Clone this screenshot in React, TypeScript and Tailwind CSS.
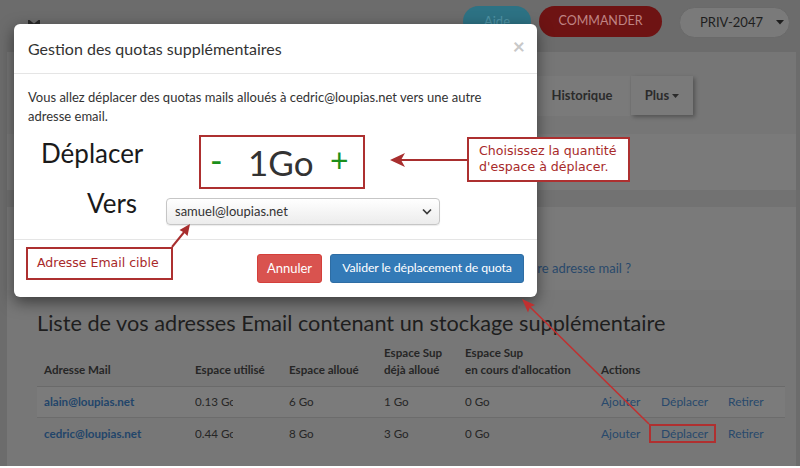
import React from "react";

const lato = "font-['Lato',sans-serif]";
const dv = "font-['DejaVu_Sans',sans-serif]";

function Modal() {
  return (
    <div className={`absolute left-[14px] top-[24px] w-[523px] h-[273px] bg-white rounded-[6px] shadow-[0_5px_15px_rgba(0,0,0,0.5)] flex flex-col ${lato} text-[#333]`}>
      <div className="h-[49px] border-b border-[#e5e5e5] flex items-center pl-[14px] pr-[14px] box-content">
        <div className="text-[16px] leading-[20px] mt-[1px]">Gestion des quotas supplémentaires</div>
        <div className="ml-auto text-[21px] font-bold leading-none text-[#c8c8c8] -mt-[6px] mr-[-2px]">×</div>
      </div>
      <div className="h-[165px] px-[14px] pt-[14px] flex flex-col">
        <p className="text-[13px] leading-[19px] h-[38px]">
          Vous allez déplacer des quotas mails alloués à cedric@loupias.net vers une autre adresse email.
        </p>
        <div className="flex items-start mt-[9px] h-[54px]">
          <div className="w-[171px] pl-[13px] text-[26px] leading-[26px] mt-[5px] text-[#1a1a1a]">Déplacer</div>
          <div className="w-[166px] h-[54px] border-2 border-[#ad3030] flex items-center">
            <span className="w-[48px] pl-[9px] text-[34px] leading-none text-[#1b8f1b] -mt-[4px]">-</span>
            <span className="w-[82px] text-[35px] leading-none text-[#333] -ml-[1px]">1Go</span>
            <span className="text-[32px] leading-none text-[#1b8f1b] -mt-[4px]">+</span>
          </div>
        </div>
        <div className="flex items-start mt-[9px] h-[27px]">
          <div className="w-[138px] pl-[59px] text-[26px] leading-[26px] -mt-[8px] text-[#1a1a1a]">Vers</div>
          <div className="w-[274px] h-[27px] rounded-[4px] border border-[#c6c6c6] bg-[linear-gradient(#ffffff,#ececec)] shadow-[0_1px_1px_rgba(0,0,0,0.08)] flex items-center pl-[8px] pr-[7px]">
            <span className="text-[13px] text-[#333]">samuel@loupias.net</span>
            <svg className="ml-auto" width="10" height="7" viewBox="0 0 10 7">
              <path d="M1 1.5l4 4 4-4" stroke="#3a3a3a" strokeWidth="1.7" fill="none" />
            </svg>
          </div>
        </div>
      </div>
      <div className="border-t border-[#e5e5e5] flex-1 flex items-center justify-end gap-[8px] pr-[13px]">
        <div className="h-[29px] w-[65px] rounded-[3px] bg-[#d9534f] border border-[#d43f3a] text-white text-[13px] flex items-center justify-center">Annuler</div>
        <div className="h-[29px] w-[194px] rounded-[3px] bg-[#337ab7] border border-[#2e6da4] text-white text-[12.3px] tracking-[-0.1px] flex items-center justify-center whitespace-nowrap">Valider le déplacement de quota</div>
      </div>
    </div>
  );
}

function Row({ email, used, alloc, sup, cur, striped }: { email: string; used: string; alloc: string; sup: string; cur: string; striped?: boolean }) {
  const cell = "pl-[7px] flex items-center whitespace-nowrap";
  return (
    <div className={`grid grid-cols-[151px_94px_95px_81px_136px_191px] text-[11.6px] text-[#262626] ${striped ? "h-[31px] bg-[#7b7b7b] border-b border-[#6c6c6c]" : "h-[31px]"}`}>
      <div className={`${cell} font-bold text-[#22456a]`}>{email}</div>
      <div className={cell}><span className="inline-block w-[38px] overflow-hidden">{used}</span></div>
      <div className={cell}>{alloc}</div>
      <div className={cell}>{sup}</div>
      <div className={cell}>{cur}</div>
      <div className={`${cell} text-[12px] text-[#28496c]`}>
        <span className="w-[60px]">Ajouter</span>
        <span className="w-[67px]">Déplacer</span>
        <span>Retirer</span>
      </div>
    </div>
  );
}

export default function App() {
  return (
    <div className={`relative w-[800px] h-[468px] overflow-hidden bg-[#6c6c6c] ${lato}`}>
      {/* header */}
      <div className="h-[52px] flex items-start">
        <div className="pl-[28px] pt-[20px]">
          <svg width="12" height="6" viewBox="0 0 12 6"><path d="M1 6V1l5 4 5-4v5" stroke="#2a2a2a" strokeWidth="2.2" fill="none" /></svg>
        </div>
        <div className="ml-auto flex items-start pt-[6px] pr-[10px]">
          <div className="w-[68px] h-[31px] rounded-full bg-[#2d7284] text-[#4f93a5] text-[13px] flex items-center justify-center">Aide</div>
          <div className="ml-[8px] w-[123px] h-[31px] rounded-full bg-[#6e1313] text-[#c08484] text-[12.5px] flex items-center justify-center">COMMANDER</div>
          <div className="ml-[17px] mt-[1px] w-[111px] h-[31px] rounded-full bg-[#7a7a7a] border border-[#6a6a6a] text-[#1e1e1e] text-[13px] flex items-center pl-[20px] gap-[13px]">
            <span>PRIV-2047</span>
            <svg width="8" height="5" viewBox="0 0 8 5"><path d="M0 0h8L4 4.5z" fill="#1e1e1e" /></svg>
          </div>
        </div>
      </div>
      {/* main column */}
      <div className="mx-[7px] w-[789px] bg-[#727272] flex flex-col">
        <div className="h-[82px] bg-[#767676] pt-[24px] flex items-start">
          <div className="ml-[523px] w-[100px] h-[40px] bg-[#7a7a7a] flex items-center justify-center pl-[4px] text-[13px] font-bold text-[#2b2b2b]">Historique</div>
          <div className="ml-[1px] w-[62px] h-[39px] bg-[#7a7a7a] shadow-[2px_2px_4px_rgba(0,0,0,0.3)] flex items-center justify-center gap-[3px] text-[13px] font-bold text-[#2b2b2b]">
            <span>Plus</span>
            <svg width="7" height="4" viewBox="0 0 7 4"><path d="M0 0h7L3.5 4z" fill="#2b2b2b" /></svg>
          </div>
        </div>
        <div className="h-[56px] bg-[#7a7a7a]" />
        <div className="h-[17px]" />
        <div className="h-[83px] bg-[#7a7a7a] pt-[52px] pr-[165px] flex justify-end">
          <div className="w-[94px] h-[18px] overflow-hidden flex justify-end">
            <span className="text-[13px] leading-[18px] text-[#29496b] whitespace-nowrap">re adresse mail ?</span>
          </div>
        </div>
        <div className="h-[176px] bg-[#777777] pl-[30px] pt-[18px]">
          <div className="h-[30px] text-[21.7px] leading-[30px] text-[#1e1e1e] whitespace-nowrap">Liste de vos adresses Email contenant un stockage supplémentaire</div>
          <div className="w-[748px]">
            <div className="grid grid-cols-[151px_94px_95px_81px_136px_191px] h-[49px] border-b border-[#6a6a6a] text-[11.6px] font-bold text-[#262626] leading-[17px] pb-[8px] items-end">
              <div className="pl-[7px]">Adresse Mail</div>
              <div className="pl-[7px]">Espace utilisé</div>
              <div className="pl-[7px]">Espace alloué</div>
              <div className="pl-[7px]">Espace Sup<br />déjà alloué</div>
              <div className="pl-[7px] whitespace-nowrap">Espace Sup<br />en cours d'allocation</div>
              <div className="pl-[7px]">Actions</div>
            </div>
            <Row email="alain@loupias.net" used="0.13 Go" alloc="6 Go" sup="1 Go" cur="0 Go" striped />
            <Row email="cedric@loupias.net" used="0.44 Go" alloc="8 Go" sup="3 Go" cur="0 Go" />
          </div>
        </div>
      </div>
      <div className="h-[2px] bg-white" />

      <Modal />

      {/* annotations */}
      <div className={`absolute left-[26px] top-[247px] w-[147px] h-[33px] bg-white border-2 border-[#ad3030] flex items-center pl-[9px] text-[12.5px] text-[#a82a2a] ${dv}`}>Adresse Email cible</div>
      <div className={`absolute left-[467px] top-[137px] w-[163px] h-[45px] bg-white border-2 border-[#ad3030] pl-[10px] pt-[4px] text-[12.6px] leading-[16px] text-[#a82a2a] whitespace-nowrap ${dv}`}>
        Choisissez la quantité<br />d'espace à déplacer.
      </div>
      <div className="absolute left-[649px] top-[424px] w-[67px] h-[19px] border-2 border-[#b03030]" />
      <svg className="absolute left-0 top-0 pointer-events-none" width="800" height="468" viewBox="0 0 800 468">
        <line x1="172" y1="247" x2="185" y2="231" stroke="#a82e2e" strokeWidth="2" />
        <polygon points="190,224 187.5,236 184,232.5 179.5,230" fill="#a82e2e" />
        <line x1="467" y1="160" x2="400" y2="160" stroke="#a82e2e" strokeWidth="2" />
        <polygon points="390,160 405,153 401,160 405,167" fill="#a82e2e" />
        <line x1="649" y1="424" x2="530" y2="307" stroke="#c03030" strokeWidth="1.6" />
        <polygon points="522,299 535,305 530,307 528,312.5" fill="#c03030" />
      </svg>
    </div>
  );
}
